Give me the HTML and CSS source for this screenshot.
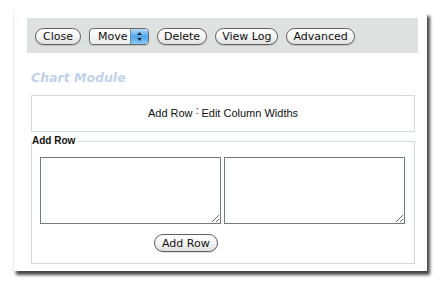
FILE: index.html
```html
<!DOCTYPE html>
<html>
<head>
<meta charset="utf-8">
<link rel="stylesheet" href="styles.css">
</head>
<body>
<div class="card">
  <div class="toolbar">
    <button class="btn btn-close">Close</button>
    <div class="select"><span class="sel-label">Move</span><span class="sel-arrow"><svg width="7" height="11" viewBox="0 0 7 11"><path d="M3.5 1 L6 4 L1 4 Z M3.5 10 L6 7 L1 7 Z" fill="#1b2a44"/></svg></span></div>
    <button class="btn">Delete</button>
    <button class="btn">View Log</button>
    <button class="btn">Advanced</button>
  </div>
  <div class="title">Chart Module</div>
  <div class="links">Add Row <span class="sep">:</span> Edit Column Widths</div>
  <fieldset class="addrow">
    <legend>Add Row</legend>
    <div class="inner">
      <div class="areas">
        <textarea></textarea>
        <textarea></textarea>
      </div>
      <div class="actions"><button class="btn">Add Row</button></div>
    </div>
  </fieldset>
</div>
</body>
</html>
```

FILE: styles.css
```css
html, body {
  margin: 0;
  padding: 0;
  background: #fff;
}
body {
  font-family: "DejaVu Sans", Verdana, sans-serif;
  width: 444px;
  height: 289px;
  overflow: hidden;
}
.card {
  margin: 12px 0 0 13px;
  width: 414px;
  height: 259px;
  box-sizing: border-box;
  padding: 6px 0 0 13px;
  background: #fff;
  border-left: 1px solid #ececec;
  box-shadow: 3px 4px 3px rgba(0,0,0,0.72);
}
.toolbar {
  width: 391px;
  height: 35px;
  box-sizing: border-box;
  background: #dde1e0;
  display: flex;
  align-items: center;
  gap: 8px;
  padding: 1px 0 0 8px;
}
.btn {
  font-family: "DejaVu Sans", Verdana, sans-serif;
  font-size: 11px;
  color: #111;
  height: 17px;
  padding: 0 6px;
  border: 1px solid #5e5e5e;
  border-radius: 9px;
  background: linear-gradient(#ffffff 0%, #f5f5f5 50%, #dfdfdf 100%);
  box-shadow: 0 1px 1px rgba(0,0,0,0.15);
  line-height: 15px;
  margin: 0;
}
.btn-close {
  padding: 0 7px;
}
.select {
  display: flex;
  height: 17px;
  width: 60px;
  box-sizing: border-box;
  border: 1px solid #6a6a6a;
  border-radius: 4px;
  overflow: hidden;
  background: linear-gradient(#ffffff, #ececec);
  font-size: 11px;
  color: #111;
  box-shadow: 0 1px 1px rgba(0,0,0,0.15);
}
.sel-label {
  flex: 1;
  padding-left: 8px;
  line-height: 15px;
}
.sel-arrow {
  width: 17px;
  display: flex;
  align-items: center;
  justify-content: center;
  background: linear-gradient(#b9dcf7, #4fa6ea 50%, #8cc8f4);
  border-left: 1px solid #6a8fb0;
}
.title {
  margin: 15px 0 0 4px;
  height: 20px;
  font-family: "DejaVu Sans", Verdana, sans-serif;
  font-weight: bold;
  font-style: italic;
  font-size: 12.5px;
  color: #bfd1ec;
  line-height: 20px;
}
.links {
  margin: 7px 0 0 4px;
  width: 384px;
  height: 37px;
  box-sizing: border-box;
  border: 1px solid #d3dada;
  text-align: center;
  font-family: "Liberation Sans", Arial, sans-serif;
  font-size: 11px;
  color: #111;
  line-height: 35px;
}
.sep {
  display: inline-block;
  font-size: 10px;
  transform: translateY(-3px);
}
.addrow {
  margin: 3px 0 0 4px;
  width: 384px;
  height: 129px;
  box-sizing: border-box;
  border: 1px solid #d3dada;
  padding: 0;
}
.addrow legend {
  padding: 0 2px 0 0;
  margin-left: 0;
  font-family: "Liberation Sans", Arial, sans-serif;
  font-size: 10px;
  font-weight: bold;
  color: #111;
  line-height: 12px;
}
.inner {
  padding: 10px 0 0 8px;
}
.areas {
  display: flex;
  gap: 3px;
}
textarea {
  display: block;
  width: 181px;
  height: 67px;
  box-sizing: border-box;
  border: 1px solid #6f7c7c;
  margin: 0;
  padding: 0;
  resize: both;
  background: #fff;
}
.actions {
  display: flex;
  margin: 10px 0 0 114px;
}
.actions .btn {
  padding: 0 7px;
  height: 18px;
}
```
